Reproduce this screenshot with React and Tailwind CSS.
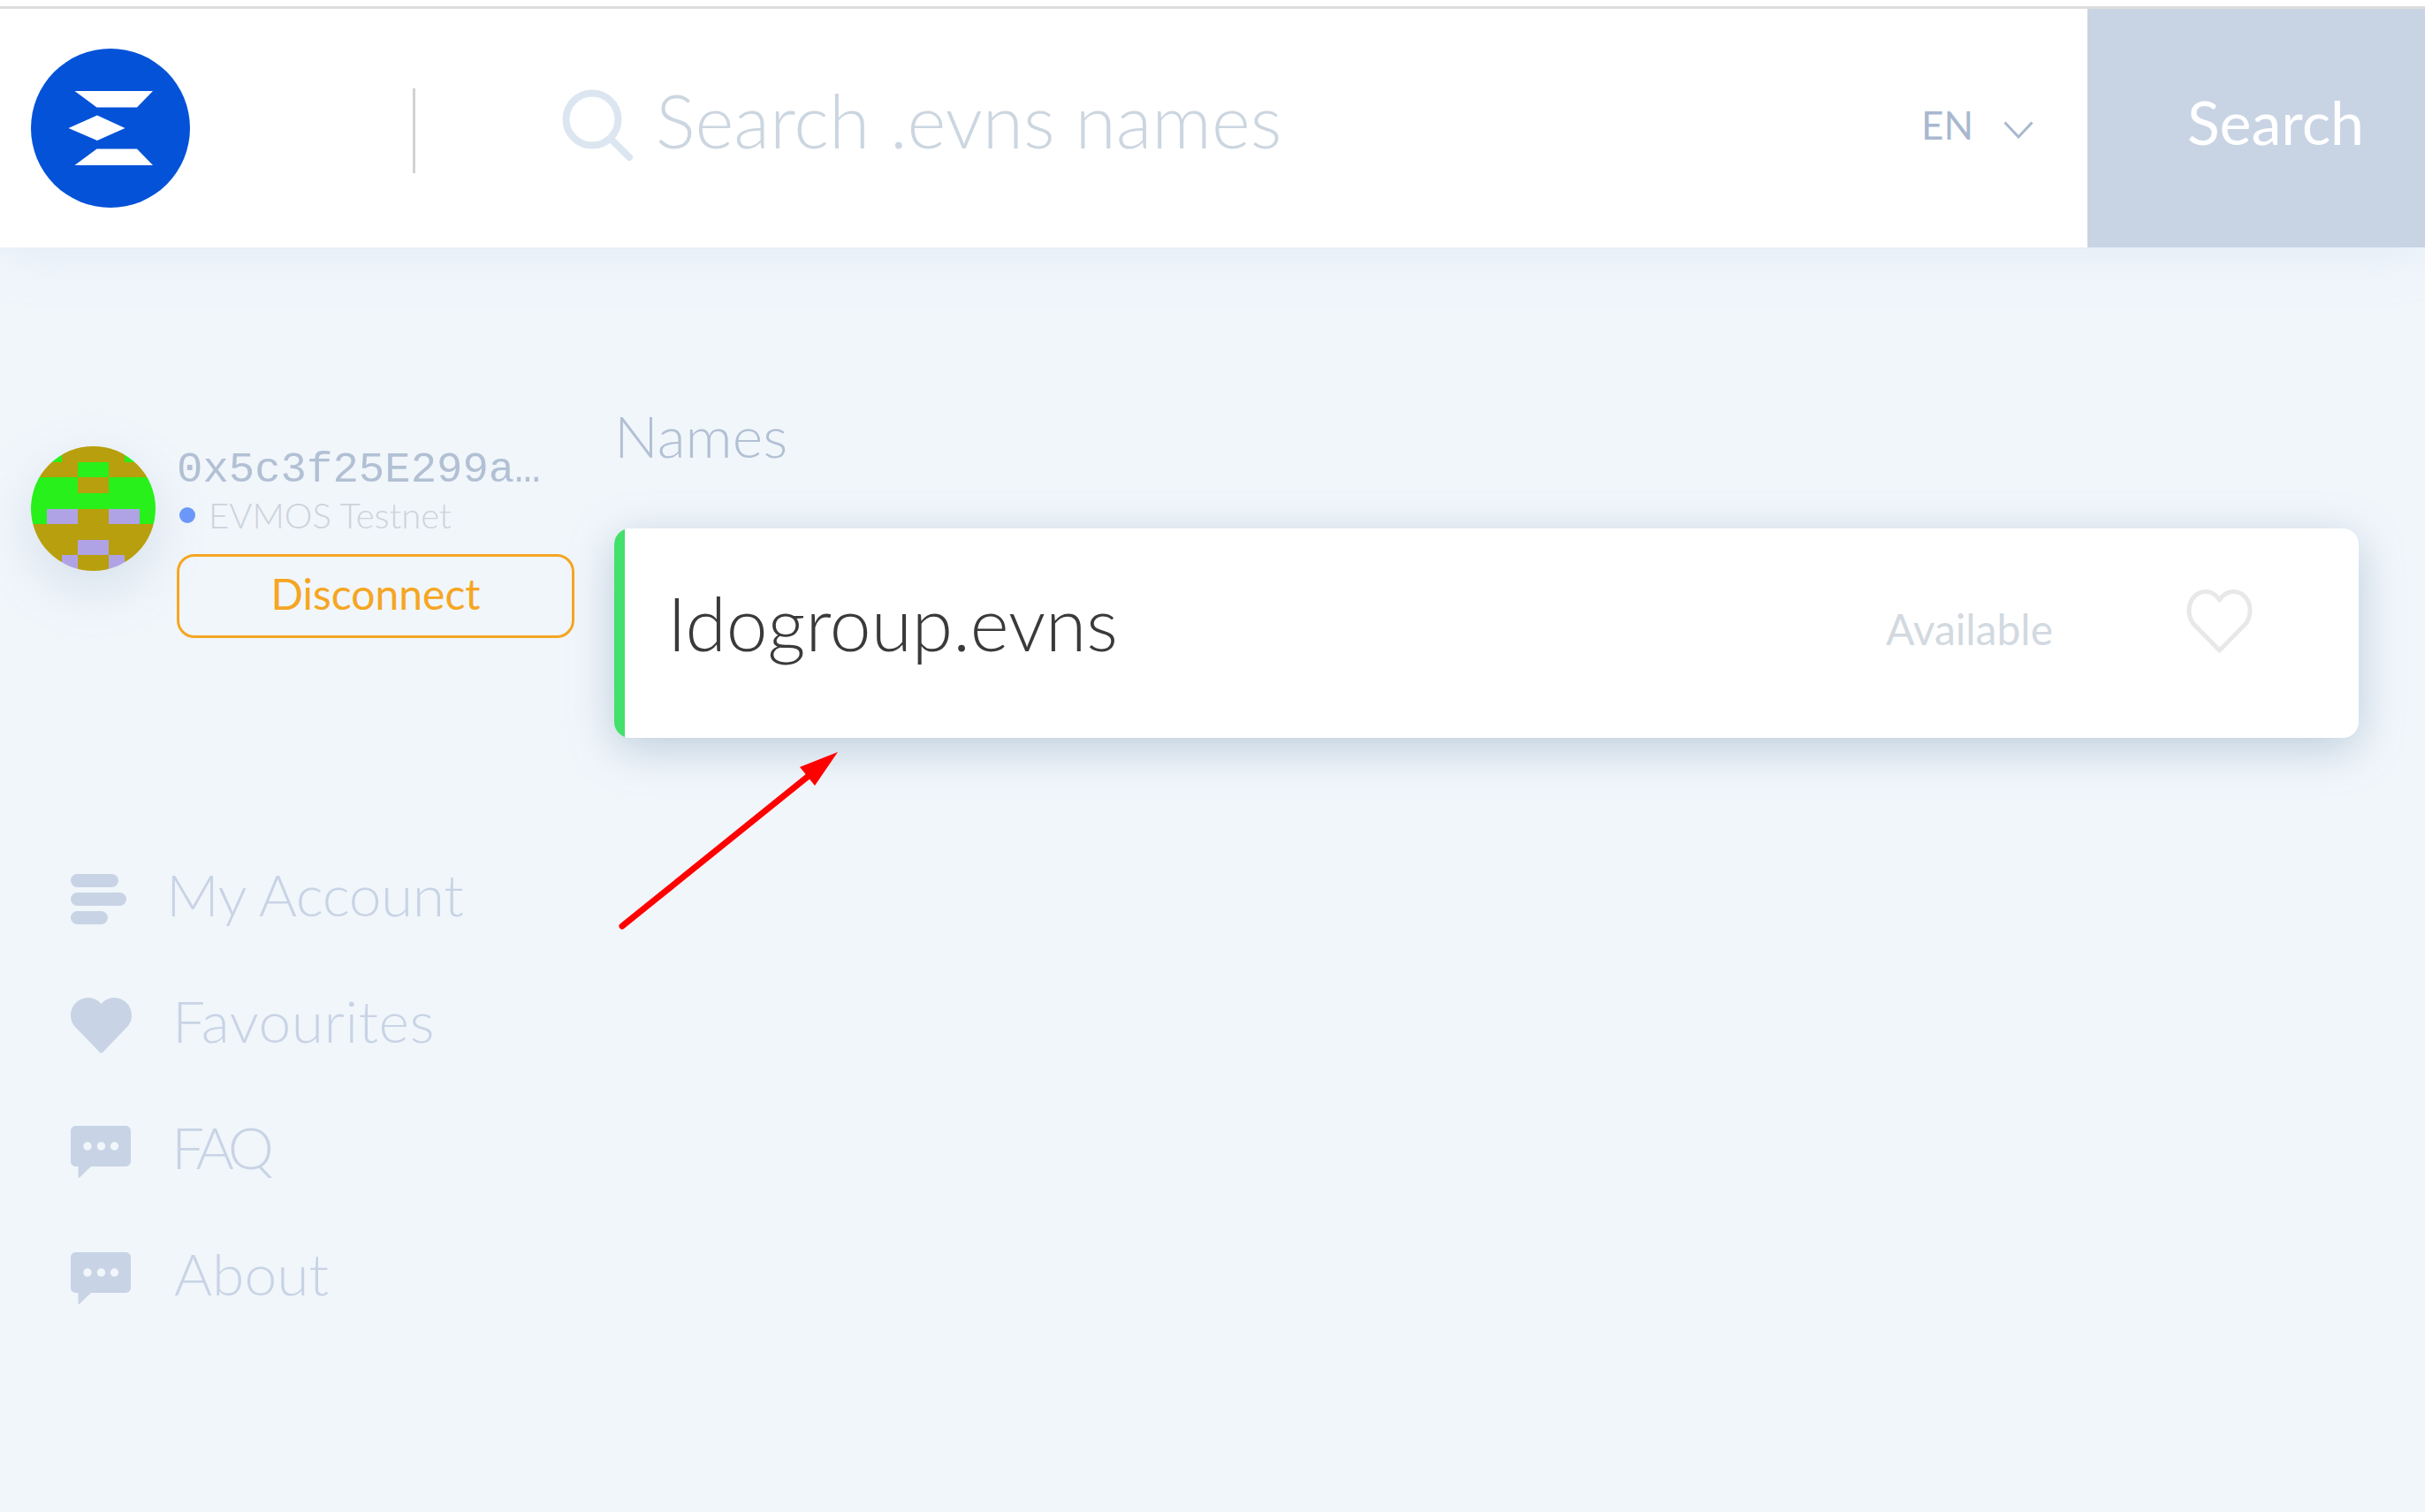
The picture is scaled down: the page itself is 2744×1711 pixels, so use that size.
import React from 'react';

const sans = { fontFamily: 'Lato, sans-serif' };

// blockies grid: y = gold, G = green, p = purple
const BLOCKS = [
  'yGyyyyGy',
  'yyyGGyyy',
  'GGGyyGGG',
  'GGGGGGGG',
  'GppyyppG',
  'yyyyyyyy',
  'yyyppyyy',
  'yypyypyy',
];
const BLOCK_COLORS = { y: '#b89f0d', G: '#28f01a', p: '#b0a3e5' };

const Avatar = () => (
  <svg viewBox="0 0 8 8" shapeRendering="crispEdges" className="w-[141px] h-[141px] rounded-full shrink-0 shadow-[0_20px_60px_rgba(120,150,180,0.22)]">
    {BLOCKS.map((row, y) =>
      row.split('').map((c, x) => <rect key={`${x}-${y}`} x={x} y={y} width="1" height="1" fill={BLOCK_COLORS[c]} />)
    )}
  </svg>
);

const Logo = () => (
  <svg viewBox="0 0 180 180" className="w-[180px] h-[180px] shrink-0">
    <circle cx="90" cy="90" r="90" fill="#0452d8" />
    <path d="M49.5 48H138L120 66.500H74.500Z" fill="#fff" />
    <path d="M42.500 90L75 75.500L106.500 90L75 104Z" fill="#fff" />
    <path d="M74.500 113.500H120L138 132H49.500Z" fill="#fff" />
  </svg>
);

const SearchIcon = () => (
  <svg viewBox="0 0 84 82" className="w-[84px] h-[82px] shrink-0" fill="none" stroke="#dce6f0">
    <circle cx="35" cy="34" r="29.500" strokeWidth="8" />
    <path d="M57 57L77 77" strokeWidth="8" strokeLinecap="round" />
  </svg>
);

const BarsIcon = () => (
  <div className="w-[69px] flex flex-col gap-[6px] mt-[10px]">
    <div className="h-[15px] w-[54px] rounded-full bg-[#c8d4e5]" />
    <div className="h-[15px] w-[63px] rounded-full bg-[#c8d4e5]" />
    <div className="h-[15px] w-[42px] rounded-full bg-[#c8d4e5]" />
  </div>
);

const HeartIcon = () => (
  <svg viewBox="0 0 69 63" className="w-[69px] h-[63px] mt-[10px]">
    <path
      d="M34.500 7C30 2 25 0 20 0C8.500 0 0 9 0 20C0 26 2.500 30.500 6 34L32 61C33.500 63 35.500 63 37 61L63 34C66.500 30.500 69 26 69 20C69 9 60.500 0 49 0C44 0 39 2 34.500 7Z"
      fill="#c8d4e5"
    />
  </svg>
);

const ChatIcon = () => (
  <svg viewBox="0 0 68 59" className="w-[68px] h-[59px] mt-[10px]">
    <path
      d="M6 0H62C65.500 0 68 2.500 68 6V40C68 43.500 65.500 46 62 46H23L10 58.500C9.500 59 8.500 59 8.500 58V46H6C2.500 46 0 43.500 0 40V6C0 2.500 2.500 0 6 0Z"
      fill="#c8d4e5"
    />
    <circle cx="19" cy="23" r="4.700" fill="#f1f6fb" />
    <circle cx="34.500" cy="23" r="4.700" fill="#f1f6fb" />
    <circle cx="49.500" cy="23" r="4.700" fill="#f1f6fb" />
  </svg>
);

const NAV = [
  { label: 'My Account', icon: <BarsIcon />, cls: 'gap-[39px]', text: '-tracking-[0.5px]' },
  { label: 'Favourites', icon: <HeartIcon />, cls: 'gap-[46px]', text: 'tracking-[0.5px]' },
  { label: 'FAQ', icon: <ChatIcon />, cls: 'gap-[46px]', text: '-tracking-[6px]' },
  { label: 'About', icon: <ChatIcon />, cls: 'gap-[49px]', text: '' },
];

export default function App() {
  return (
    <div style={sans} className="h-[1711px] w-full overflow-hidden relative bg-[#f1f6fb]">
      <div className="relative z-10 h-[7px] bg-white" />
      <div className="relative z-10 h-[3px] bg-[#dddddd]" />

      <header className="relative h-[270px] bg-white flex shadow-[0_0_60px_rgba(170,200,230,0.25)]">
        <div className="flex-1 flex items-center pl-[35px]">
          <Logo />
          <div className="ml-[252px] w-[3px] h-[96px] bg-[#d2d2d2] mt-[6px]" />
          <div className="ml-[165px] flex items-center gap-[23px] -mt-[6px]">
            <SearchIcon />
            <span className="text-[84px] font-light leading-none text-[#ccd6e0] -mt-[12px]">Search .evns names</span>
          </div>
          <div className="ml-auto mr-[61px] flex items-center gap-[34px] -mt-[8px]">
            <span className="text-[44px] leading-none text-[#a9b8cf]">EN</span>
            <svg viewBox="0 0 34 20" className="w-[34px] h-[20px] mt-[12px]" fill="none" stroke="#a9b8cf" strokeWidth="3">
              <path d="M1.500 1.500L17 18L32.500 1.500" />
            </svg>
          </div>
        </div>
        <button className="w-[382px] bg-[#c8d4e4] flex items-center justify-center pl-[44px] pb-[14px] text-[68px] leading-none text-white">
          Search
        </button>
      </header>

      <div className="flex">
        <aside className="w-[695px] shrink-0 pl-[35px] pt-[225px]">
          <div className="flex gap-[24px]">
            <Avatar />
            <div className="w-[450px] pt-[2px]">
              <div className="text-[49px] leading-[50px] text-[#b2c0d4]" style={{ fontFamily: '"Liberation Mono", monospace' }}>
                0x5c3f25E299a…
              </div>
              <div className="flex items-center gap-[15px] h-[40px] mt-[6px] pl-[3px]">
                <span className="w-[18px] h-[18px] rounded-full bg-[#6b97f8]" />
                <span className="text-[40px] font-light leading-none text-[#cdd3da]">EVMOS Testnet</span>
              </div>
              <button className="mt-[24px] w-[450px] h-[95px] pb-[6px] rounded-[20px] border-[3px] border-[#f5a623] text-[48px] leading-none text-[#f5a623]">
                Disconnect
              </button>
            </div>
          </div>

          <nav className="mt-[260px] pl-[45px] flex flex-col gap-[83px]">
            {NAV.map((item) => (
              <div key={item.label} className={`flex items-center h-[60px] ${item.cls}`}>
                {item.icon}
                <span className={`text-[66px] font-light leading-none text-[#c8d4e5] ${item.text}`}>{item.label}</span>
              </div>
            ))}
          </nav>
        </aside>

        <main className="flex-1 pr-[75px] pt-[180px]">
          <h2 className="h-[138px] text-[66px] font-light leading-none text-[#b2c0d4]">Names</h2>
          <div className="h-[237px] rounded-[18px] bg-white flex shadow-[0_12px_50px_rgba(110,145,175,0.4)] overflow-hidden">
            <div className="w-[12px] bg-[#44e06c]" />
            <div className="flex-1 flex items-center pl-[48px] pr-[120px]">
              <span className="text-[84px] font-light leading-none text-[#3a3a3a] -mt-[24px]">Idogroup.evns</span>
              <span className="ml-auto text-[48px] leading-none text-[#d2d9e0] -mt-[10px]">Available</span>
              <svg viewBox="0 0 75 72" className="ml-[151px] w-[75px] h-[72px] -mt-[28px]" fill="none">
                <path
                  d="M37.500 12C33 5 28 2.500 22 2.500C11 2.500 3 12 3 24C3 30 5 35 8 39L37.500 69L67 39C70 35 72 30 72 24C72 12 64 2.500 53 2.500C47 2.500 42 5 37.500 12Z"
                  stroke="#e8e8e8"
                  strokeWidth="5"
                  strokeLinejoin="round"
                />
              </svg>
            </div>
          </div>
        </main>
      </div>

      {/* red annotation arrow drawn over the page */}
      <svg className="absolute left-0 top-0 w-[1000px] h-[1100px] pointer-events-none" viewBox="0 0 1000 1100">
        <path d="M704 1048L915 878" stroke="#ff0000" strokeWidth="7" strokeLinecap="round" />
        <path d="M948 851L905 868L922 889Z" fill="#ff0000" />
      </svg>
    </div>
  );
}
